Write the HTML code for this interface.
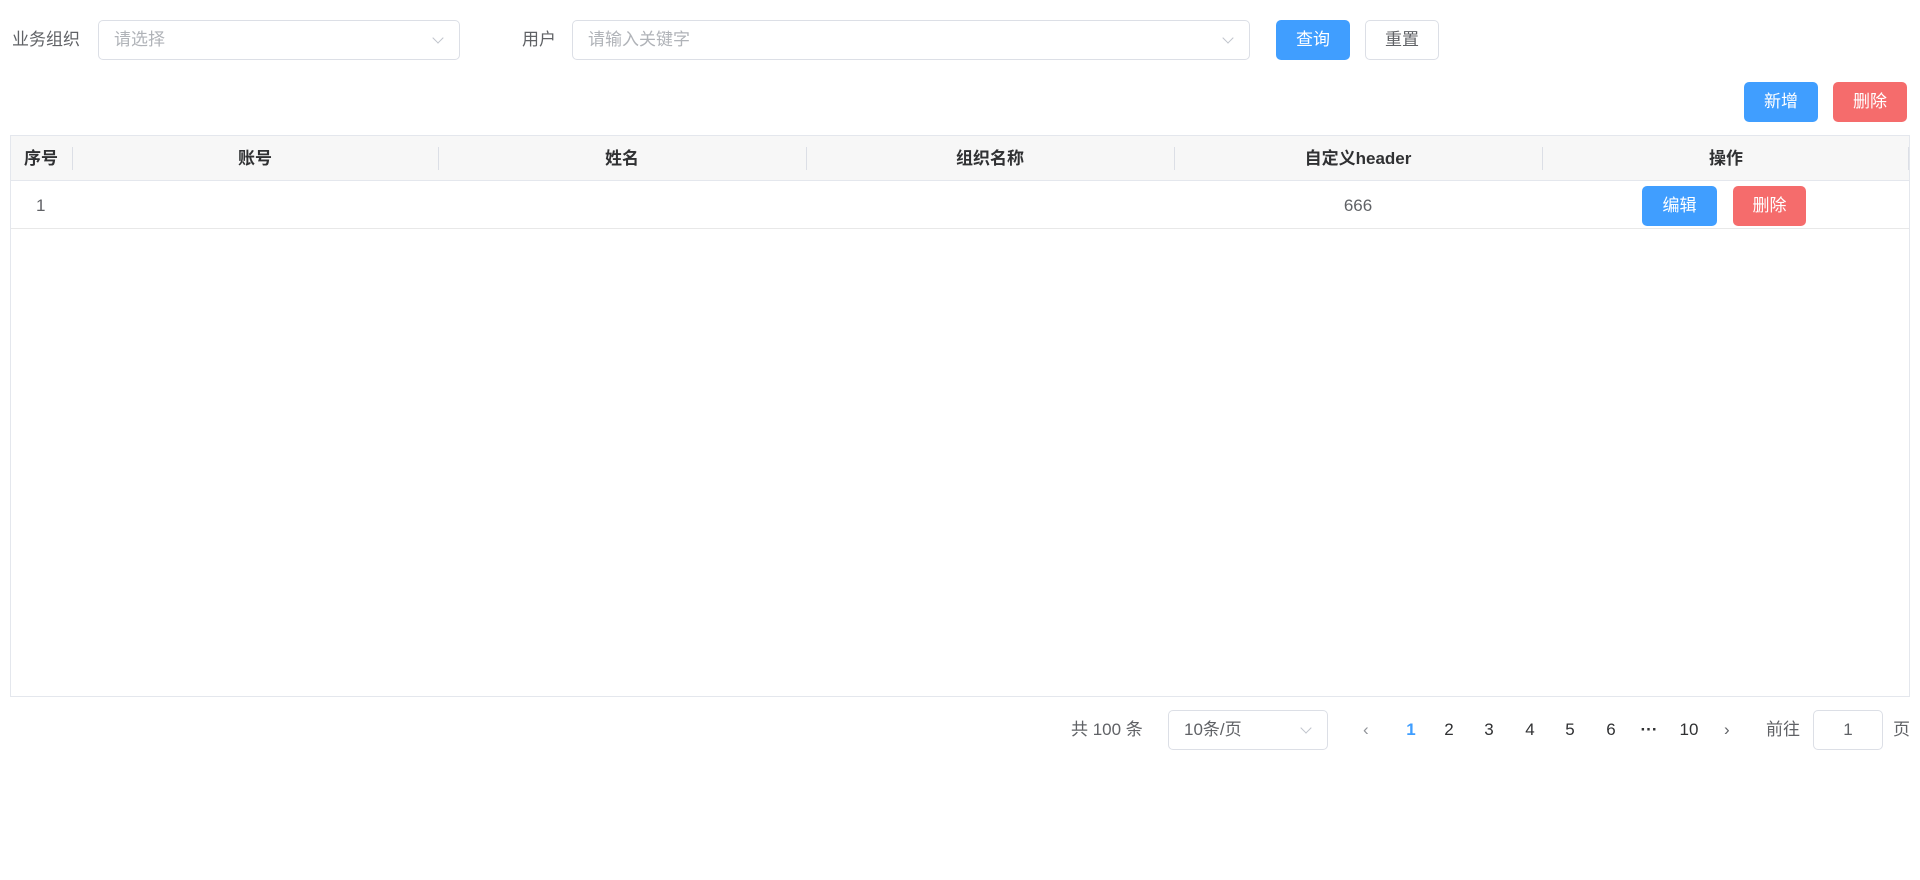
<!DOCTYPE html>
<html><head><meta charset="utf-8"><style>
*{box-sizing:border-box;margin:0;padding:0}
body{width:1920px;height:880px;background:#fff;font-family:"Liberation Sans","Noto Sans CJK SC",sans-serif;font-size:17px;color:#606266;position:relative;overflow:hidden}
.a{position:absolute}
.lbl{line-height:40px;top:20px}
.inp{border:1px solid #dcdfe6;border-radius:5px;height:40px;top:20px;line-height:38px;padding-left:15px;color:#b0b3b8}
.arr{position:absolute;right:17px;top:13px;width:8px;height:8px;border-right:1px solid #c0c4cc;border-bottom:1px solid #c0c4cc;transform:rotate(45deg)}
.btn{height:40px;line-height:40px;text-align:center;border-radius:5px;color:#fff;font-size:17px}
.p{background:#409eff}.d{background:#f56c6c}
.th{top:135px;height:47px;line-height:47px;text-align:center;font-weight:bold;color:#303133;font-size:17px}
.sep{top:147px;width:1px;height:23px;background:#dcdfe6}
.pg{top:710px;line-height:40px;color:#303133;font-size:17px}
</style></head><body>
<div class="a lbl" style="left:12px">业务组织</div>
<div class="a inp" style="left:98px;width:362px">请选择<span class="arr"></span></div>
<div class="a lbl" style="left:522px">用户</div>
<div class="a inp" style="left:572px;width:678px">请输入关键字<span class="arr"></span></div>
<div class="a btn p" style="left:1276px;top:20px;width:74px">查询</div>
<div class="a btn" style="left:1365px;top:20px;width:74px;border:1px solid #dcdfe6;color:#606266;line-height:38px">重置</div>
<div class="a btn p" style="left:1744px;top:82px;width:74px">新增</div>
<div class="a btn d" style="left:1833px;top:82px;width:74px">删除</div>

<div class="a" style="left:10px;top:135px;width:1900px;height:562px;border:1px solid #e4e7ed"></div>
<div class="a" style="left:11px;top:136px;width:1898px;height:45px;background:#f7f7f7;border-bottom:1px solid #e4e7ed"></div>
<div class="a" style="left:11px;top:228px;width:1898px;height:1px;background:#e8e8e8"></div>
<div class="a th" style="left:10px;width:62px">序号</div>
<div class="a th" style="left:72px;width:366px">账号</div>
<div class="a th" style="left:438px;width:368px">姓名</div>
<div class="a th" style="left:806px;width:368px">组织名称</div>
<div class="a th" style="left:1174px;width:368px">自定义header</div>
<div class="a th" style="left:1542px;width:368px">操作</div>
<div class="a sep" style="left:72px"></div><div class="a sep" style="left:438px"></div><div class="a sep" style="left:806px"></div><div class="a sep" style="left:1174px"></div><div class="a sep" style="left:1542px"></div><div class="a sep" style="left:1908px"></div>
<div class="a" style="left:36px;top:186px;line-height:40px">1</div>
<div class="a" style="left:1174px;width:368px;top:186px;line-height:40px;text-align:center">666</div>
<div class="a btn p" style="left:1642px;top:186px;width:75px">编辑</div>
<div class="a btn d" style="left:1733px;top:186px;width:73px">删除</div>

<div class="a pg" style="left:1071px;color:#606266;font-size:17px">共 100 条</div>
<div class="a inp" style="left:1168px;top:710px;width:160px;color:#606266">10条/页<span class="arr"></span></div>
<div class="a pg" style="left:1363px;color:#909399">‹</div>
<div class="a pg" style="left:1400px;width:22px;text-align:center;color:#409eff;font-weight:bold">1</div>
<div class="a pg" style="left:1438px;width:22px;text-align:center">2</div>
<div class="a pg" style="left:1478px;width:22px;text-align:center">3</div>
<div class="a pg" style="left:1519px;width:22px;text-align:center">4</div>
<div class="a pg" style="left:1559px;width:22px;text-align:center">5</div>
<div class="a pg" style="left:1600px;width:22px;text-align:center">6</div>
<div class="a pg" style="left:1638px;width:22px;text-align:center;font-weight:bold">···</div>
<div class="a pg" style="left:1674px;width:30px;text-align:center">10</div>
<div class="a pg" style="left:1724px;color:#606266">›</div>
<div class="a pg" style="left:1766px;color:#606266;font-size:17px">前往</div>
<div class="a inp" style="left:1813px;top:710px;width:70px;padding:0;text-align:center;color:#606266">1</div>
<div class="a pg" style="left:1893px;color:#606266;font-size:17px">页</div>
</body></html>
